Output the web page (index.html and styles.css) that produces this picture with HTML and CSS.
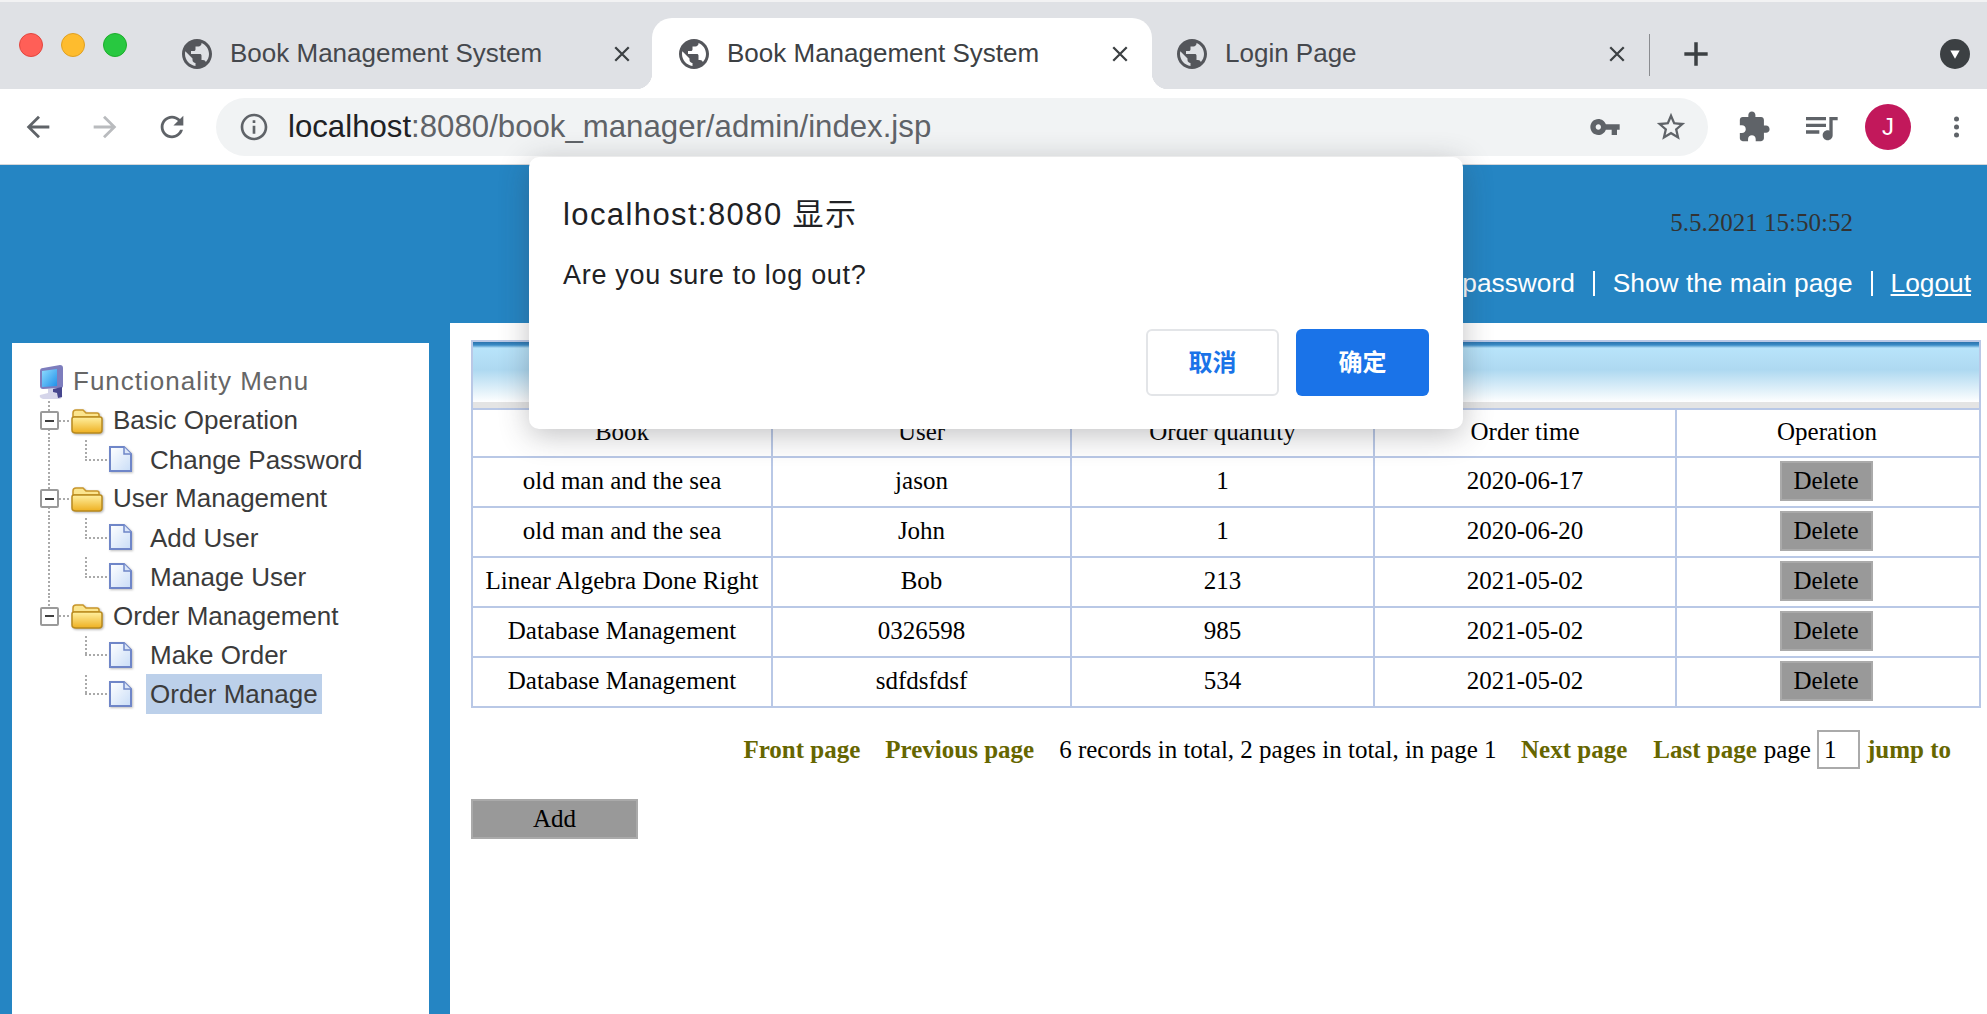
FILE: index.html
```html
<!DOCTYPE html>
<html>
<head>
<meta charset="utf-8">
<title>Book Management System</title>
<link rel="stylesheet" href="styles.css">
</head>
<body>

<svg class="defs" width="0" height="0">
  <defs>
    <linearGradient id="folderFill" x1="0" y1="0" x2="0" y2="1">
      <stop offset="0" stop-color="#fff0a0"/>
      <stop offset="1" stop-color="#eeb021"/>
    </linearGradient>
    <linearGradient id="docFill" x1="0" y1="0" x2="1" y2="1">
      <stop offset="0" stop-color="#ffffff"/>
      <stop offset="1" stop-color="#c9ddf7"/>
    </linearGradient>
    <linearGradient id="screenFill" x1="0" y1="0" x2="1" y2="1">
      <stop offset="0" stop-color="#8fdcff"/>
      <stop offset="1" stop-color="#1f8fe8"/>
    </linearGradient>
    <symbol id="globe" viewBox="2 2 20 20"><path d="M12 2C6.48 2 2 6.48 2 12s4.48 10 10 10 10-4.48 10-10S17.52 2 12 2zm-1 17.93c-3.95-.49-7-3.85-7-7.93 0-.62.08-1.21.21-1.79L9 15v1c0 1.1.9 2 2 2v1.93zm6.9-2.54c-.26-.81-1-1.39-1.9-1.39h-1v-3c0-.55-.45-1-1-1H8v-2h2c.55 0 1-.45 1-1V7h2c1.1 0 2-.9 2-2v-.41c2.93 1.19 5 4.06 5 7.41 0 2.08-.8 3.97-2.1 5.39z"/></symbol>
    <symbol id="close" viewBox="0 0 16 16"><path d="M2 2l12 12M14 2L2 14" fill="none" stroke="currentColor" stroke-width="2"/></symbol>
    <symbol id="folder" viewBox="0 0 32 26">
      <path d="M2 9V5c0-2 1-3 3-3h7l3 3h11c1.500 0 2 1 2 2v2z" fill="#fbe58e" stroke="#c9962a" stroke-width="1.500"/>
      <path d="M1 11c0-1 1-2 2-2h26c1 0 2 1 2 2v11c0 2-1 3-3 3H5c-2 0-4-1-4-3z" fill="url(#folderFill)" stroke="#b98a1e" stroke-width="1.500"/>
    </symbol>
    <symbol id="doc" viewBox="0 0 25 27">
      <path d="M2 1h14l7 7v17H2z" fill="url(#docFill)" stroke="#6f86c8" stroke-width="2"/>
      <path d="M16 1v7h7" fill="#dbe6f8" stroke="#6f86c8" stroke-width="1.500"/>
    </symbol>
  </defs>
</svg>

<div class="browser">
  <div class="tabstrip">
    <div class="lights">
      <span class="light light-red"></span>
      <span class="light light-yellow"></span>
      <span class="light light-green"></span>
    </div>
    <div class="tab">
      <svg class="tab-globe"><use href="#globe"/></svg>
      <span class="tab-title">Book Management System</span>
      <svg class="tab-close"><use href="#close"/></svg>
    </div>
    <div class="tab tab-active">
      <svg class="tab-globe"><use href="#globe"/></svg>
      <span class="tab-title">Book Management System</span>
      <svg class="tab-close"><use href="#close"/></svg>
    </div>
    <div class="tab">
      <svg class="tab-globe"><use href="#globe"/></svg>
      <span class="tab-title">Login Page</span>
      <svg class="tab-close"><use href="#close"/></svg>
    </div>
    <span class="tab-sep"></span>
    <svg class="new-tab" viewBox="0 0 24 24"><path d="M12 2v20M2 12h20" fill="none" stroke="#3c4043" stroke-width="3"/></svg>
    <span class="tab-search"><svg viewBox="0 0 12 12"><path d="M2 3h8L6 10z" fill="#fff"/></svg></span>
  </div>

  <div class="toolbar">
    <svg class="nav-icon" viewBox="0 0 24 24"><path d="M20 11H7.830l5.590-5.590L12 4l-8 8 8 8 1.410-1.410L7.830 13H20v-2z"/></svg>
    <svg class="nav-icon nav-off" viewBox="0 0 24 24"><path d="M12 4l-1.410 1.410L16.170 11H4v2h12.170l-5.580 5.590L12 20l8-8z"/></svg>
    <svg class="nav-icon" viewBox="0 0 24 24"><path d="M17.650 6.350C16.200 4.900 14.210 4 12 4c-4.420 0-7.990 3.580-7.990 8s3.570 8 7.990 8c3.730 0 6.840-2.550 7.730-6h-2.080c-.82 2.330-3.040 4-5.650 4-3.310 0-6-2.690-6-6s2.690-6 6-6c1.660 0 3.140.69 4.220 1.780L13 11h7V4l-2.350 2.350z"/></svg>
    <div class="omnibox">
      <svg class="omni-info" viewBox="0 0 24 24"><path d="M11 7h2v2h-2zm0 4h2v6h-2zm1-9C6.480 2 2 6.480 2 12s4.480 10 10 10 10-4.480 10-10S17.520 2 12 2zm0 18c-4.410 0-8-3.590-8-8s3.590-8 8-8 8 3.590 8 8-3.590 8-8 8z"/></svg>
      <span class="omni-url"><b>localhost</b>:8080/book_manager/admin/index.jsp</span>
      <svg class="omni-key" viewBox="0 0 24 24"><path d="M12.650 10C11.830 7.670 9.610 6 7 6c-3.310 0-6 2.690-6 6s2.690 6 6 6c2.610 0 4.830-1.670 5.650-4H17v4h4v-4h2v-4H12.650zM7 14c-1.100 0-2-.9-2-2s.9-2 2-2 2 .9 2 2-.9 2-2 2z"/></svg>
      <svg class="omni-star" viewBox="0 0 24 24"><path d="M22 9.240l-7.190-.62L12 2 9.190 8.630 2 9.240l5.460 4.730L5.820 21 12 17.270 18.180 21l-1.630-7.030L22 9.240zM12 15.400l-3.760 2.270 1-4.280-3.320-2.880 4.380-.38L12 6.100l1.710 4.040 4.380.38-3.320 2.880 1 4.280L12 15.400z"/></svg>
    </div>
    <svg class="tool-icon" viewBox="0 0 24 24"><path d="M20.500 11H19V7c0-1.100-.9-2-2-2h-4V3.500C13 2.120 11.880 1 10.500 1S8 2.120 8 3.500V5H4c-1.100 0-1.990.9-1.990 2v3.800H3.500c1.490 0 2.700 1.210 2.700 2.700s-1.210 2.700-2.700 2.700H2V20c0 1.100.9 2 2 2h3.800v-1.500c0-1.490 1.210-2.700 2.700-2.700 1.490 0 2.700 1.210 2.700 2.700V22H17c1.100 0 2-.9 2-2v-4h1.500c1.380 0 2.500-1.120 2.500-2.500S21.880 11 20.500 11z"/></svg>
    <svg class="tool-icon tool-queue" viewBox="0 0 24 24"><path d="M15 6H3v2h12V6zm0 4H3v2h12v-2zM3 16h8v-2H3v2zM17 6v8.180c-.31-.11-.65-.18-1-.18-1.660 0-3 1.340-3 3s1.340 3 3 3 3-1.340 3-3V8h3V6h-5z"/></svg>
    <span class="avatar">J</span>
    <svg class="tool-dots" viewBox="0 0 6 24"><circle cx="3" cy="4" r="2.500"/><circle cx="3" cy="12" r="2.500"/><circle cx="3" cy="20" r="2.500"/></svg>
  </div>
</div>

<div class="page">
  <div class="page-head">
    <div class="clock">5.5.2021 15:50:52</div>
    <div class="head-links">
      <span>Welcome, admin</span><i></i>
      <span>Change password</span><i></i>
      <span>Show the main page</span><i></i>
      <a>Logout</a>
    </div>
  </div>

  <div class="page-body">
    <div class="sidebar">
      <div class="tree-title">
        <svg class="computer" viewBox="0 0 24 34">
          <path d="M4 3l17-3c2 0 3 1 3 3v18c0 1-1 2-2 2L4 24c-2 0-3-1-3-3V6c0-2 1-3 3-3z" fill="#7d7dbd"/>
          <path d="M3 6l15-2v17L3 22z" fill="url(#screenFill)"/>
          <path d="M9 24h8v4l6 2c1 2-1 4-3 4H6c-4 0-6-2-5-4l8-2z" fill="#d5d5ea"/>
          <path d="M14 24l9-2v10l-4 1-1-5-4-1z" fill="#46468e"/>
        </svg>
        <span>Functionality Menu</span>
      </div>

      <div class="tree-row">
        <span class="toggle"><b></b></span><span class="dash"></span>
        <svg class="folder"><use href="#folder"/></svg>
        <span class="node-text">Basic Operation</span>
      </div>
      <div class="tree-row">
        <span class="trunk"></span><span class="elbow"></span>
        <svg class="doc"><use href="#doc"/></svg>
        <span class="leaf-text">Change Password</span>
      </div>
      <div class="tree-row">
        <span class="toggle"><b></b></span><span class="dash"></span>
        <svg class="folder"><use href="#folder"/></svg>
        <span class="node-text">User Management</span>
      </div>
      <div class="tree-row">
        <span class="trunk"></span><span class="elbow"></span>
        <svg class="doc"><use href="#doc"/></svg>
        <span class="leaf-text">Add User</span>
      </div>
      <div class="tree-row">
        <span class="trunk"></span><span class="elbow"></span>
        <svg class="doc"><use href="#doc"/></svg>
        <span class="leaf-text">Manage User</span>
      </div>
      <div class="tree-row">
        <span class="toggle toggle-last"><b></b></span><span class="dash"></span>
        <svg class="folder"><use href="#folder"/></svg>
        <span class="node-text">Order Management</span>
      </div>
      <div class="tree-row">
        <span class="trunk trunk-none"></span><span class="elbow"></span>
        <svg class="doc"><use href="#doc"/></svg>
        <span class="leaf-text">Make Order</span>
      </div>
      <div class="tree-row">
        <span class="trunk trunk-none"></span><span class="elbow"></span>
        <svg class="doc"><use href="#doc"/></svg>
        <span class="leaf-text leaf-selected">Order Manage</span>
      </div>
    </div>

    <div class="content">
      <div class="list-head"></div>
      <table class="list">
        <colgroup>
          <col class="col-a"><col class="col-b"><col class="col-c"><col class="col-d"><col class="col-e">
        </colgroup>
        <tr class="list-top"><th>Book</th><th>User</th><th>Order quantity</th><th>Order time</th><th>Operation</th></tr>
        <tr><td>old man and the sea</td><td>jason</td><td>1</td><td>2020-06-17</td><td><button class="btn btn-del">Delete</button></td></tr>
        <tr><td>old man and the sea</td><td>John</td><td>1</td><td>2020-06-20</td><td><button class="btn btn-del">Delete</button></td></tr>
        <tr><td>Linear Algebra Done Right</td><td>Bob</td><td>213</td><td>2021-05-02</td><td><button class="btn btn-del">Delete</button></td></tr>
        <tr><td>Database Management</td><td>0326598</td><td>985</td><td>2021-05-02</td><td><button class="btn btn-del">Delete</button></td></tr>
        <tr><td>Database Management</td><td>sdfdsfdsf</td><td>534</td><td>2021-05-02</td><td><button class="btn btn-del">Delete</button></td></tr>
      </table>

      <div class="pager">
        <a>Front page</a>
        <a>Previous page</a>
        <span class="pager-info">6 records in total, 2 pages in total, in page 1</span>
        <a class="pager-next">Next page</a>
        <a class="pager-last">Last page</a>
        <span class="pager-word">page</span>
        <input class="pager-input" type="text" value="1">
        <a class="pager-jump">jump to</a>
      </div>

      <button class="btn btn-add">Add</button>
    </div>
  </div>
</div>

<div class="dialog">
  <div class="dialog-title">localhost:8080 显示</div>
  <div class="dialog-msg">Are you sure to log out?</div>
  <div class="dialog-btns">
    <button class="dlg-btn dlg-cancel">取消</button>
    <button class="dlg-btn dlg-ok">确定</button>
  </div>
</div>

</body>
</html>
```

FILE: styles.css
```css
html, body {
    margin: 0;
    height: 100%;
    overflow: hidden;
}

body {
    display: flex;
    flex-direction: column;
    background: #2585c3;
    font-family: "Liberation Serif", "Noto Sans CJK SC", serif;
    font-size: 25px;
    color: #000;
}

.defs {
    display: block;
    height: 0;
}

/* browser chrome */
.browser {
    height: 165px;
    flex: none;
    font-family: "Liberation Sans", "Noto Sans CJK SC", sans-serif;
}

.tabstrip {
    height: 87px;
    border-top: 2px solid #f2f2f3;
    background: #dfe1e5;
    display: flex;
    align-items: flex-end;
}

.lights {
    width: 159px;
    height: 71px;
    display: flex;
    gap: 18px;
    padding: 15px 0 0 19px;
    box-sizing: border-box;
    flex: none;
}

.light {
    width: 24px;
    height: 24px;
    border-radius: 50%;
    box-sizing: border-box;
}

.light-red { background: #ff5f57; border: 1px solid #e2463f; }
.light-yellow { background: #febc2e; border: 1px solid #dfa023; }
.light-green { background: #28c840; border: 1px solid #1dad2b; }

.tab {
    width: 493px;
    height: 71px;
    flex: none;
    display: flex;
    align-items: center;
    padding: 0 21px 0 23px;
    box-sizing: border-box;
    color: #45484d;
    position: relative;
}

.tab + .tab { width: 500px; padding-left: 27px; padding-right: 23px; }
.tab-active + .tab { width: 497px; padding-left: 25px; padding-right: 23px; }

.tab-active {
    background: #fff;
    border-radius: 20px 20px 0 0;
    color: #3c4043;
}

.tab-active::before,
.tab-active::after {
    content: "";
    position: absolute;
    bottom: 0;
    width: 16px;
    height: 16px;
}

.tab-active::before {
    left: -16px;
    background: radial-gradient(circle at 0 0, transparent 16px, #fff 16.5px);
}

.tab-active::after {
    right: -16px;
    background: radial-gradient(circle at 100% 0, transparent 16px, #fff 16.5px);
}

.tab-globe {
    width: 30px;
    height: 30px;
    fill: #54565b;
    flex: none;
}

.tab-title {
    margin-left: 18px;
    font-size: 26px;
    white-space: nowrap;
    flex: 1;
}

.tab-close {
    width: 18px;
    height: 18px;
    flex: none;
    color: #3c4043;
}

.tab-sep {
    width: 1px;
    height: 42px;
    margin: 0 0 13px 0;
    background: #8a8c90;
    flex: none;
}

.new-tab {
    width: 28px;
    height: 28px;
    margin: 0 0 21px 32px;
    flex: none;
}

.tab-search {
    width: 30px;
    height: 30px;
    margin: 0 17px 20px auto;
    border-radius: 50%;
    background: #3c4043;
    display: flex;
    align-items: center;
    justify-content: center;
}

.tab-search svg {
    width: 14px;
    height: 14px;
}

.toolbar {
    height: 76px;
    background: #fff;
    border-bottom: 1px solid #d5d7da;
    box-sizing: border-box;
    display: flex;
    align-items: center;
    padding-left: 21px;
}

.nav-icon {
    width: 34px;
    height: 34px;
    fill: #5f6368;
    margin-right: 33px;
    flex: none;
}

.nav-off { fill: #b9bbbe; }

.omnibox {
    width: 1492px;
    height: 58px;
    margin-left: -6px;
    border-radius: 29px;
    background: #f1f3f4;
    display: flex;
    align-items: center;
    padding: 0 20px 0 22px;
    box-sizing: border-box;
    flex: none;
}

.omni-info {
    width: 32px;
    height: 32px;
    fill: #5f6368;
    flex: none;
}

.omni-url {
    margin-left: 18px;
    font-size: 31.200px;
    color: #5f6368;
    white-space: nowrap;
    flex: 1;
}

.omni-url b {
    font-weight: normal;
    color: #202124;
}

.omni-key {
    width: 32px;
    height: 32px;
    fill: #5f6368;
    margin-right: 33px;
}

.omni-star {
    width: 34px;
    height: 34px;
    fill: #5f6368;
}

.tool-icon {
    width: 34px;
    height: 34px;
    fill: #5f6368;
    margin-left: 29px;
    flex: none;
}

.tool-icon.tool-queue {
    width: 40px;
    height: 40px;
    margin-left: 30px;
}

.avatar {
    width: 46px;
    height: 46px;
    margin-left: 24px;
    border-radius: 50%;
    background: #c2185b;
    color: #fff;
    font-size: 24px;
    display: flex;
    align-items: center;
    justify-content: center;
    flex: none;
}

.tool-dots {
    width: 7px;
    height: 24px;
    margin-left: 42px;
    fill: #5f6368;
    flex: none;
}

/* page under the chrome */
.page {
    flex: 1;
    display: flex;
    flex-direction: column;
    min-height: 0;
}

.page-head {
    height: 158px;
    flex: none;
    display: flex;
    flex-direction: column;
    align-items: flex-end;
    box-sizing: border-box;
}

.clock {
    margin: 44px 134px 0 0;
    color: #333;
    line-height: 27px;
}

.head-links {
    margin: 32px 16px 0 0;
    color: #fff;
    font-family: "Liberation Sans", sans-serif;
    font-size: 26.300px;
    line-height: 30px;
    display: flex;
    align-items: center;
}

.head-links i {
    width: 2px;
    height: 25px;
    margin: 0 18px;
    background: #fff;
}

.head-links a {
    text-decoration: underline;
}

.page-body {
    flex: 1;
    display: flex;
    min-height: 0;
}

/* left tree */
.sidebar {
    width: 417px;
    margin: 20px 0 0 12px;
    padding: 19px 0 0 27px;
    background: #fff;
    box-sizing: border-box;
    flex: none;
    font-family: "Liberation Sans", sans-serif;
    font-size: 26px;
    color: #3b3b3b;
}

.tree-title {
    height: 39px;
    display: flex;
    align-items: center;
    color: #666;
    letter-spacing: 1px;
}

.computer {
    width: 24px;
    height: 34px;
    margin-right: 10px;
}

.tree-row {
    height: 39.100px;
    display: flex;
    align-items: center;
}

.toggle {
    width: 20px;
    height: 100%;
    flex: none;
    display: flex;
    align-items: center;
    justify-content: center;
    background: repeating-linear-gradient(to bottom, #aaa 0 2px, transparent 2px 4px) center / 2px 100% no-repeat;
}

.toggle-last {
    background-size: 2px 50%;
    background-position: center top;
}

.toggle b {
    width: 15px;
    height: 15px;
    border: 2px solid #9a9a9a;
    border-radius: 2px;
    background: linear-gradient(#404040, #404040) center / 9px 2px no-repeat, #fff;
}

.dash {
    width: 12px;
    height: 2px;
    background: repeating-linear-gradient(to right, #aaa 0 2px, transparent 2px 4px);
    flex: none;
}

.folder {
    width: 32px;
    height: 26px;
    flex: none;
    filter: drop-shadow(1px 1px 1px rgba(0, 0, 0, .3));
}

.node-text {
    margin-left: 10px;
    white-space: nowrap;
}

.trunk {
    width: 20px;
    height: 100%;
    flex: none;
    background: repeating-linear-gradient(to bottom, #aaa 0 2px, transparent 2px 4px) center / 2px 100% no-repeat;
}

.trunk-none { background: none; }

.elbow {
    width: 23px;
    height: 100%;
    margin-left: 26px;
    flex: none;
    background:
        repeating-linear-gradient(to bottom, #aaa 0 2px, transparent 2px 4px) left top / 2px 50% no-repeat,
        repeating-linear-gradient(to right, #aaa 0 2px, transparent 2px 4px) left center / 100% 2px no-repeat;
}

.doc {
    width: 25px;
    height: 27px;
    flex: none;
    filter: drop-shadow(1px 1px 1px rgba(0, 0, 0, .25));
}

.leaf-text {
    margin-left: 13px;
    padding: 4px 4px;
    line-height: 32px;
    white-space: nowrap;
}

.leaf-selected {
    background: #bcd0ea;
}

/* right list */
.content {
    flex: 1;
    margin-left: 21px;
    padding: 17px 6px 0 21px;
    background: #fff;
    min-width: 0;
}

.list-head {
    height: 68px;
    border: 2px solid #b9c8e6;
    border-width: 2px 2px 0;
    box-sizing: border-box;
    background:
        linear-gradient(to bottom, #2b74ad 0, #3a8bc6 3px, #b8e4fa 6px, #aed9f1 28px, #f4fafd 56px, #fff 60px, #e4e4e4 60px);
}

.list {
    width: 100%;
    table-layout: fixed;
    border-collapse: collapse;
}

.col-a { width: 300px; }
.col-b { width: 299px; }
.col-c { width: 303px; }
.col-d { width: 302px; }

.list th,
.list td {
    height: 50px;
    padding: 0 0 2px;
    border: 2px solid #b9c8e6;
    box-sizing: border-box;
    text-align: center;
    font-weight: normal;
    white-space: nowrap;
}

.list .list-top th {
    height: 48px;
}

.list th:last-child {
    padding-right: 2px;
}

.btn {
    background: #999;
    border: 2px solid #aaa;
    padding: 0;
    font-family: "Liberation Serif", serif;
    font-size: 25px;
    color: #000;
    display: inline-block;
    vertical-align: middle;
}

.btn-del {
    width: 93px;
    height: 40px;
    margin-right: 4px;
}

.btn-add {
    width: 167px;
    height: 40px;
    display: block;
    margin-top: 28px;
}

.pager {
    margin-top: 20px;
    padding-right: 30px;
    height: 43px;
    display: flex;
    justify-content: flex-end;
    align-items: center;
    font-weight: bold;
    color: #666600;
    white-space: nowrap;
}

.pager a { margin-left: 25px; }
.pager .pager-next { margin-left: 24.500px; }
.pager .pager-last { margin-left: 26px; }
.pager .pager-jump { margin-left: 7px; }

.pager-info {
    margin-left: 25px;
    font-weight: normal;
    color: #000;
}

.pager-word {
    font-weight: normal;
    color: #000;
    margin-left: 7px;
}

.pager-input {
    width: 43px;
    height: 39px;
    margin-left: 6px;
    padding: 0 0 0 5px;
    border: 2px solid #aaa;
    box-sizing: border-box;
    font-family: "Liberation Serif", serif;
    font-size: 25px;
}

/* confirm box */
.dialog {
    position: absolute;
    left: 529px;
    top: 157px;
    width: 934px;
    height: 272px;
    padding: 40px 34px 33px;
    background: #fff;
    border-radius: 10px;
    box-shadow: 0 6px 30px rgba(50, 50, 55, .3);
    box-sizing: border-box;
    font-family: "Liberation Sans", "Noto Sans CJK SC", sans-serif;
    color: #202124;
    display: flex;
    flex-direction: column;
}

.dialog-title {
    font-size: 31px;
    line-height: 36px;
    letter-spacing: 1.400px;
}

.dialog-msg {
    margin-top: 26px;
    font-size: 27px;
    line-height: 32px;
    letter-spacing: .7px;
}

.dialog-btns {
    margin-top: auto;
    display: flex;
    justify-content: flex-end;
    gap: 17px;
}

.dlg-btn {
    width: 133px;
    height: 67px;
    border-radius: 6px;
    font-family: "Noto Sans CJK SC", sans-serif;
    font-size: 24px;
    font-weight: 700;
    box-sizing: border-box;
    padding: 0 0 5px;
}

.dlg-cancel {
    background: #fff;
    border: 2px solid #e3e5e8;
    color: #1a73e8;
}

.dlg-ok {
    background: #1a73e8;
    border: 0;
    color: #fff;
}
```
